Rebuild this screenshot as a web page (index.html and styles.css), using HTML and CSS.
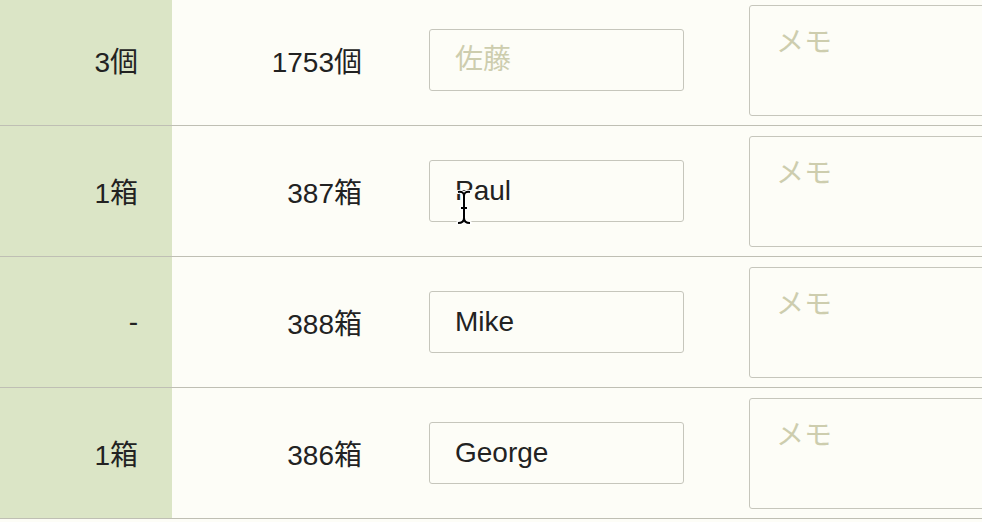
FILE: index.html
```html
<!DOCTYPE html>
<html lang="ja">
<head>
<meta charset="utf-8">
<link rel="stylesheet" href="styles.css">
</head>
<body>
<div class="table">
  <div class="row">
    <div class="cell qty">3個</div>
    <div class="cell stock">1753個</div>
    <div class="cell name"><input class="name-input" type="text" placeholder="佐藤"></div>
    <div class="cell memo"><textarea class="memo-input" placeholder="メモ"></textarea></div>
  </div>
  <div class="row">
    <div class="cell qty">1箱</div>
    <div class="cell stock">387箱</div>
    <div class="cell name">
      <input class="name-input" type="text" value="Paul">
      <svg class="ibeam" width="16" height="36" viewBox="0 0 16 36">
        <path d="M2 3 Q8 2 8 7 Q8 2 14 3 M8 7 V29 Q8 34 2 34 M8 29 Q8 34 14 34 M5 19 H11" fill="none" stroke="#fff" stroke-width="4" stroke-linecap="round"/>
        <path d="M2 3 Q8 2 8 7 Q8 2 14 3 M8 7 V29 Q8 34 2 34 M8 29 Q8 34 14 34 M5 19 H11" fill="none" stroke="#000" stroke-width="2"/>
      </svg>
    </div>
    <div class="cell memo"><textarea class="memo-input" placeholder="メモ"></textarea></div>
  </div>
  <div class="row">
    <div class="cell qty">-</div>
    <div class="cell stock">388箱</div>
    <div class="cell name"><input class="name-input" type="text" value="Mike"></div>
    <div class="cell memo"><textarea class="memo-input" placeholder="メモ"></textarea></div>
  </div>
  <div class="row">
    <div class="cell qty">1箱</div>
    <div class="cell stock">386箱</div>
    <div class="cell name"><input class="name-input" type="text" value="George"></div>
    <div class="cell memo"><textarea class="memo-input" placeholder="メモ"></textarea></div>
  </div>
</div>
</body>
</html>
```

FILE: styles.css
```css
html, body {
  margin: 0;
  padding: 0;
  overflow: hidden;
  background: #fdfdf7;
  font-family: "Liberation Sans", "Noto Sans CJK JP", sans-serif;
  color: #222;
}

.table {
  margin-top: -5px;
}

.row {
  display: grid;
  grid-template-columns: 172px 224px 353px 1fr;
  height: 130px;
  border-bottom: 1px solid #bfbfb4;
}

.cell {
  display: flex;
  align-items: center;
  font-size: 28px;
}

.qty {
  background: #dbe5c6;
  justify-content: flex-end;
  padding-right: 34px;
}

.stock {
  justify-content: flex-end;
  padding-right: 34px;
}

.name {
  position: relative;
  padding-left: 33px;
}

.name-input {
  box-sizing: border-box;
  width: 255px;
  height: 62px;
  padding: 0 25px;
  border: 1px solid #c6c6bc;
  border-radius: 3px;
  background: transparent;
  font-family: "Liberation Sans", "Noto Sans CJK JP", sans-serif;
  font-size: 28px;
  color: #222;
  outline: none;
}

.name-input::placeholder,
.memo-input::placeholder {
  color: #cdcdae;
}

.memo {
  align-items: flex-start;
  padding-top: 10px;
}

.memo-input {
  box-sizing: border-box;
  width: 300px;
  height: 111px;
  padding: 14px 26px;
  border: 1px solid #c6c6bc;
  border-radius: 3px;
  background: transparent;
  font-family: "Liberation Sans", "Noto Sans CJK JP", sans-serif;
  font-size: 28px;
  resize: none;
  outline: none;
}

.ibeam {
  position: absolute;
  left: 60px;
  top: 63px;
}
```
